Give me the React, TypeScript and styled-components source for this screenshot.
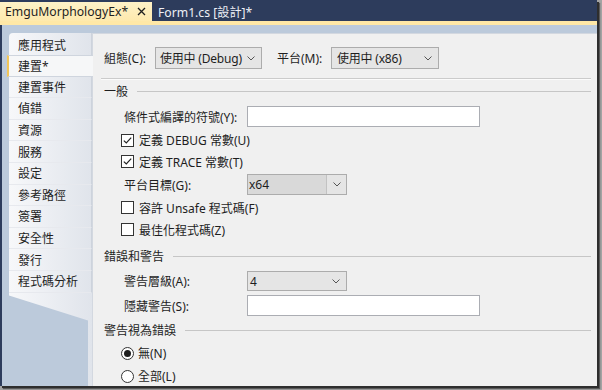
import React from "react";
import styled, { createGlobalStyle } from "styled-components";

const GlobalStyle = createGlobalStyle`
  body {
    margin: 0;
    background: #a3a3a3;
  }
  * {
    box-sizing: border-box;
  }
`;

const uiFont = `"Noto Sans", "Noto Sans CJK TC", sans-serif`;

const Page = styled.div`
  width: 602px;
  height: 390px;
  background: #a3a3a3;
  overflow: hidden;
`;

const Window = styled.div`
  width: 597px;
  height: 386px;
  display: flex;
  flex-direction: column;
  overflow: hidden;
  box-shadow: 2px 2px 0 #2e2e2e, 3px 3px 1px #5a5a5a;
  font-family: ${uiFont};
  font-size: 12px;
  color: #1e1e1e;
`;

const TabBar = styled.div`
  height: 21px;
  flex-shrink: 0;
  display: flex;
  align-items: flex-end;
  background: #2d3c5c;
`;

const DocTab = styled.div<{ $active?: boolean }>`
  height: 19px;
  display: flex;
  align-items: center;
  justify-content: space-between;
  padding: 0 6px 0 ${(p) => (p.$active ? 5 : 6)}px;
  width: ${(p) => (p.$active ? "152px" : "auto")};
  background: ${(p) => (p.$active ? "linear-gradient(#fdf2c8, #fee9ad)" : "transparent")};
  color: ${(p) => (p.$active ? "#1e1e1e" : "#eef0f6")};
  font-size: 12.2px;
  white-space: nowrap;
`;

const YellowRule = styled.div`
  height: 4px;
  flex-shrink: 0;
  background: #ffe8a6;
`;

const Body = styled.div`
  flex: 1;
  display: flex;
  min-height: 0;
  background: #bccadb;
  border-left: 2px solid #2d3c5c;
  padding: 8px 0 0 7px;
`;

const SideNav = styled.div`
  width: 83px;
  flex-shrink: 0;
  display: flex;
  flex-direction: column;
`;

const NavItem = styled.div<{ $selected?: boolean; $first?: boolean }>`
  position: relative;
  height: ${(p) => (p.$first ? 23 : 21.6)}px;
  padding: ${(p) => (p.$first ? 1.5 : 0)}px 0 0 9px;
  display: flex;
  align-items: center;
  background: ${(p) => (p.$selected ? "#f6f7f8" : "linear-gradient(to right, #f7f8fa, #e0e4eb)")};
  border-bottom: 1px solid ${(p) => (p.$selected ? "#cfd5de" : "#e7e9ee")};
  border-top: ${(p) => (p.$selected ? "1px solid #cfd5de" : "none")};
  border-top-left-radius: ${(p) => (p.$first ? 4 : 0)}px;
  ${(p) =>
    p.$selected
      ? `margin: -1px -1px 0 -2px; border-left: 2px solid #f2c65a; z-index: 1;`
      : `border-right: 1px solid #cdd3dc;`}
  white-space: nowrap;
`;

const NavTail = styled.div`
  flex: 1;
  background: linear-gradient(to right, #f7f8fa, #e0e4eb);
  clip-path: polygon(0 0, 100% 0, 100% 100%, calc(100% - 4px) 100%, calc(100% - 4px) 28px, 0 3px);
`;

const Panel = styled.div`
  flex: 1;
  display: flex;
  flex-direction: column;
  background: #f0f0f0;
  border-top: 1px solid #d3d8e0;
  border-left: 1px solid #d3d8e0;
  padding: 13px 0 0 11px;
  overflow: hidden;
`;

const Toolbar = styled.div`
  height: 22px;
  flex-shrink: 0;
  display: flex;
  align-items: center;
`;

const BarLabel = styled.span<{ $w: number; $ml?: number }>`
  width: ${(p) => p.$w}px;
  margin-left: ${(p) => p.$ml ?? 0}px;
  flex-shrink: 0;
  white-space: nowrap;
`;

const Select = styled.div<{ $w: number; $h?: number; $pad?: number }>`
  width: ${(p) => p.$w}px;
  height: ${(p) => p.$h ?? 22}px;
  flex-shrink: 0;
  display: flex;
  align-items: center;
  justify-content: space-between;
  padding: 0 6px 0 ${(p) => p.$pad ?? 4}px;
  background: #e5e5e5;
  border: 1px solid #acacac;
  letter-spacing: -0.2px;
  white-space: nowrap;
`;

const Separator = styled.div`
  height: 2px;
  flex-shrink: 0;
  margin: 9px 6px 0 -3px;
  border-top: 1px solid #cbcbcb;
  border-bottom: 1px solid #fbfbfb;
`;

const GroupHeader = styled.div<{ $mt: number; $h: number }>`
  height: ${(p) => p.$h}px;
  margin-top: ${(p) => p.$mt}px;
  flex-shrink: 0;
  display: flex;
  align-items: center;
  white-space: nowrap;
`;

const GroupLine = styled.div`
  flex: 1;
  height: 1px;
  margin: 1px 6px 0 9px;
  background: #c6c6c6;
`;

const FieldRow = styled.div<{ $mt: number; $h: number }>`
  height: ${(p) => p.$h}px;
  margin-top: ${(p) => p.$mt}px;
  flex-shrink: 0;
  display: flex;
  align-items: center;
  padding-left: 20px;
`;

const FieldLabel = styled.span`
  width: 123px;
  flex-shrink: 0;
  white-space: nowrap;
`;

const TextBox = styled.div<{ $h: number }>`
  width: 233px;
  height: ${(p) => p.$h}px;
  background: #fff;
  border: 1px solid #abadb3;
`;

const Combo = styled.div`
  width: 100px;
  height: 21px;
  display: flex;
  border: 1px solid #acacac;
  background: #e5e5e5;
`;

const ComboText = styled.div`
  flex: 1;
  display: flex;
  align-items: center;
  padding-left: 1px;
  background: #d9d9d9;
  border-right: 1px solid #c2c2c2;
`;

const ComboButton = styled.div`
  width: 19px;
  display: flex;
  align-items: center;
  justify-content: center;
`;

const OptionRow = styled.label<{ $mt: number; $h: number; $gap: number }>`
  height: ${(p) => p.$h}px;
  margin-top: ${(p) => p.$mt}px;
  flex-shrink: 0;
  display: flex;
  align-items: center;
  gap: ${(p) => p.$gap}px;
  padding-left: 17px;
  white-space: nowrap;
`;

const CheckBox = styled.span`
  width: 13px;
  height: 13px;
  flex-shrink: 0;
  display: flex;
  align-items: center;
  justify-content: center;
  background: #fff;
  border: 1px solid #333;
`;

const RadioDot = styled.span<{ $on?: boolean }>`
  width: 13px;
  height: 13px;
  flex-shrink: 0;
  display: flex;
  align-items: center;
  justify-content: center;
  border-radius: 50%;
  background: #fff;
  border: 1px solid #333;
  &::after {
    content: "";
    width: 7px;
    height: 7px;
    border-radius: 50%;
    background: ${(p) => (p.$on ? "#1e1e1e" : "transparent")};
  }
`;

const Chevron = () => (
  <svg width="8" height="5" viewBox="0 0 8 5">
    <polyline points="0.5,0.5 4,4 7.5,0.5" fill="none" stroke="#555" strokeWidth="1" />
  </svg>
);

const CloseIcon = () => (
  <svg width="9" height="9" viewBox="0 0 9 9">
    <path d="M1 1 L8 8 M8 1 L1 8" stroke="#1e1e1e" strokeWidth="1.3" />
  </svg>
);

const Check = ({ on }: { on: boolean }) => (
  <CheckBox>
    {on ? (
      <svg width="11" height="11" viewBox="0 0 11 11">
        <polyline points="1.8,5.6 4.3,8 9.2,2.6" fill="none" stroke="#222" strokeWidth="1.2" />
      </svg>
    ) : null}
  </CheckBox>
);

const navItems = [
  "應用程式",
  "建置*",
  "建置事件",
  "偵錯",
  "資源",
  "服務",
  "設定",
  "參考路徑",
  "簽署",
  "安全性",
  "發行",
  "程式碼分析",
];

const App = () => {
  return (
    <Page>
      <GlobalStyle />
      <Window>
        <TabBar>
          <DocTab $active>
            <span>EmguMorphologyEx*</span>
            <CloseIcon />
          </DocTab>
          <DocTab>Form1.cs [設計]*</DocTab>
        </TabBar>
        <YellowRule />
        <Body>
          <SideNav>
            {navItems.map((item, i) => (
              <NavItem key={item} $first={i === 0} $selected={i === 1}>
                {item}
              </NavItem>
            ))}
            <NavTail />
          </SideNav>
          <Panel>
            <Toolbar>
              <BarLabel $w={51}>組態(C):</BarLabel>
              <Select $w={107}>
                <span>使用中 (Debug)</span>
                <Chevron />
              </Select>
              <BarLabel $w={54} $ml={15}>平台(M):</BarLabel>
              <Select $w={108} $pad={5}>
                <span>使用中 (x86)</span>
                <Chevron />
              </Select>
            </Toolbar>
            <Separator />

            <GroupHeader $mt={3} $h={16}>
              一般
              <GroupLine />
            </GroupHeader>
            <FieldRow $mt={7} $h={21}>
              <FieldLabel>條件式編譯的符號(Y):</FieldLabel>
              <TextBox $h={21} />
            </FieldRow>
            <OptionRow $mt={3} $h={20} $gap={5}>
              <Check on />
              定義 DEBUG 常數(U)
            </OptionRow>
            <OptionRow $mt={1} $h={21} $gap={5}>
              <Check on />
              定義 TRACE 常數(T)
            </OptionRow>
            <FieldRow $mt={2} $h={21}>
              <FieldLabel>平台目標(G):</FieldLabel>
              <Combo>
                <ComboText>x64</ComboText>
                <ComboButton>
                  <Chevron />
                </ComboButton>
              </Combo>
            </FieldRow>
            <OptionRow $mt={2} $h={21} $gap={5}>
              <Check on={false} />
              容許 Unsafe 程式碼(F)
            </OptionRow>
            <OptionRow $mt={1} $h={21} $gap={5}>
              <Check on={false} />
              最佳化程式碼(Z)
            </OptionRow>

            <GroupHeader $mt={7} $h={17}>
              錯誤和警告
              <GroupLine />
            </GroupHeader>
            <FieldRow $mt={7} $h={20}>
              <FieldLabel>警告層級(A):</FieldLabel>
              <Select $w={100} $h={20} $pad={2}>
                <span>4</span>
                <Chevron />
              </Select>
            </FieldRow>
            <FieldRow $mt={4} $h={21}>
              <FieldLabel>隱藏警告(S):</FieldLabel>
              <TextBox $h={21} />
            </FieldRow>

            <GroupHeader $mt={5} $h={17}>
              警告視為錯誤
              <GroupLine />
            </GroupHeader>
            <OptionRow $mt={5} $h={20} $gap={4}>
              <RadioDot $on />
              無(N)
            </OptionRow>
            <OptionRow $mt={3} $h={20} $gap={4}>
              <RadioDot />
              全部(L)
            </OptionRow>
          </Panel>
        </Body>
      </Window>
    </Page>
  );
};

export default App;
